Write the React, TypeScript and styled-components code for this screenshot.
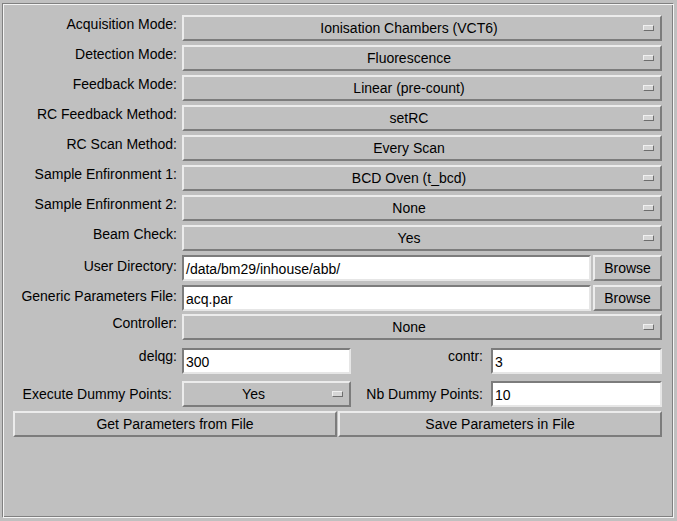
import React from "react";
import styled, { createGlobalStyle } from "styled-components";

const Global = createGlobalStyle`
  html, body { margin: 0; padding: 0; background: #c0c0c0; }
  body { font-family: "Liberation Sans", Arial, sans-serif; font-size: 14px; color: #000; }
`;

const Frame = styled.div`
  box-sizing: border-box;
  margin: 3px 0 0 2px;
  width: 672px;
  height: 515px;
  border: 1px solid;
  border-color: #808080 #f4f4f4 #f4f4f4 #808080;
  box-shadow: inset 1px 1px 0 #f4f4f4, inset -1px -1px 0 #808080;
  padding: 11px 11px 0 10px;
  display: flex;
  flex-direction: column;
`;

const Row = styled.div<{ $mt: number }>`
  display: grid;
  grid-template-columns: 164px 1fr;
  column-gap: 5px;
  margin-top: ${(p) => p.$mt}px;
  height: 26px;
`;

const PairRow = styled.div<{ $mt: number }>`
  display: grid;
  grid-template-columns: 169px 169px 140px 1fr;
  margin-top: ${(p) => p.$mt}px;
  height: 26px;
`;

const Label = styled.div<{ $pt?: number; $gap?: number }>`
  text-align: right;
  line-height: 16px;
  padding-top: ${(p) => p.$pt ?? 0}px;
  padding-right: ${(p) => p.$gap ?? 0}px;
  white-space: nowrap;
`;

const raised = `
  box-sizing: border-box;
  border: 2px solid;
  border-color: #ececec #7c7c7c #7c7c7c #ececec;
  background: #c0c0c0;
`;

const Menu = styled.div`
  ${raised}
  display: flex;
  align-items: center;
  height: 26px;
`;

const MenuText = styled.span`
  flex: 1;
  text-align: center;
  line-height: 16px;
  white-space: nowrap;
`;

const Indicator = styled.span`
  box-sizing: border-box;
  width: 11px;
  height: 6px;
  margin: 0 6px 0 9px;
  border: 1px solid;
  border-color: #f0f0f0 #6e6e6e #6e6e6e #f0f0f0;
  background: #d6d6d6;
`;

const Entry = styled.div`
  box-sizing: border-box;
  height: 26px;
  border: 2px solid;
  border-color: #7c7c7c #e6e6e6 #e6e6e6 #7c7c7c;
  background: #fff;
  padding: 2px 2px 0;
  display: flex;
  align-items: center;
  white-space: nowrap;
  overflow: hidden;
  line-height: 16px;
`;

const EntryWithButton = styled.div`
  display: grid;
  grid-template-columns: 1fr 69px;
  column-gap: 2px;
`;

const Button = styled.div`
  ${raised}
  height: 26px;
  display: flex;
  align-items: center;
  justify-content: center;
  line-height: 16px;
  white-space: nowrap;
`;

const ButtonRow = styled.div<{ $mt: number }>`
  display: grid;
  grid-template-columns: 1fr 1fr;
  column-gap: 1px;
  margin-top: ${(p) => p.$mt}px;
  height: 26px;
`;

const OptionMenu = ({ value }: { value: string }) => (
  <Menu>
    <MenuText>{value}</MenuText>
    <Indicator />
  </Menu>
);

const menus: [string, string, number][] = [
  ["Acquisition Mode:", "Ionisation Chambers (VCT6)", 0],
  ["Detection Mode:", "Fluorescence", 4],
  ["Feedback Mode:", "Linear (pre-count)", 4],
  ["RC Feedback Method:", "setRC", 4],
  ["RC Scan Method:", "Every Scan", 4],
  ["Sample Enfironment 1:", "BCD Oven (t_bcd)", 4],
  ["Sample Enfironment 2:", "None", 4],
  ["Beam Check:", "Yes", 4],
];

export default function App() {
  return (
    <>
      <Global />
      <Frame>
        {menus.map(([l, v, mt]) => (
          <Row key={l} $mt={mt}>
            <Label $pt={1}>{l}</Label>
            <OptionMenu value={v} />
          </Row>
        ))}
        <Row $mt={4}>
          <Label $pt={3}>User Directory:</Label>
          <EntryWithButton>
            <Entry>/data/bm29/inhouse/abb/</Entry>
            <Button>Browse</Button>
          </EntryWithButton>
        </Row>
        <Row $mt={4}>
          <Label $pt={3}>Generic Parameters File:</Label>
          <EntryWithButton>
            <Entry>acq.par</Entry>
            <Button>Browse</Button>
          </EntryWithButton>
        </Row>
        <Row $mt={3}>
          <Label $pt={1}>Controller:</Label>
          <OptionMenu value="None" />
        </Row>
        <PairRow $mt={8}>
          <Label $pt={-1} $gap={5}>delqg:</Label>
          <Entry>300</Entry>
          <Label $pt={-1} $gap={8}>contr:</Label>
          <Entry>3</Entry>
        </PairRow>
        <PairRow $mt={7}>
          <Label $pt={5} $gap={10}>Execute Dummy Points:</Label>
          <OptionMenu value="Yes" />
          <Label $pt={5} $gap={8}>Nb Dummy Points:</Label>
          <Entry>10</Entry>
        </PairRow>
        <ButtonRow $mt={4}>
          <Button>Get Parameters from File</Button>
          <Button>Save Parameters in File</Button>
        </ButtonRow>
      </Frame>
    </>
  );
}
